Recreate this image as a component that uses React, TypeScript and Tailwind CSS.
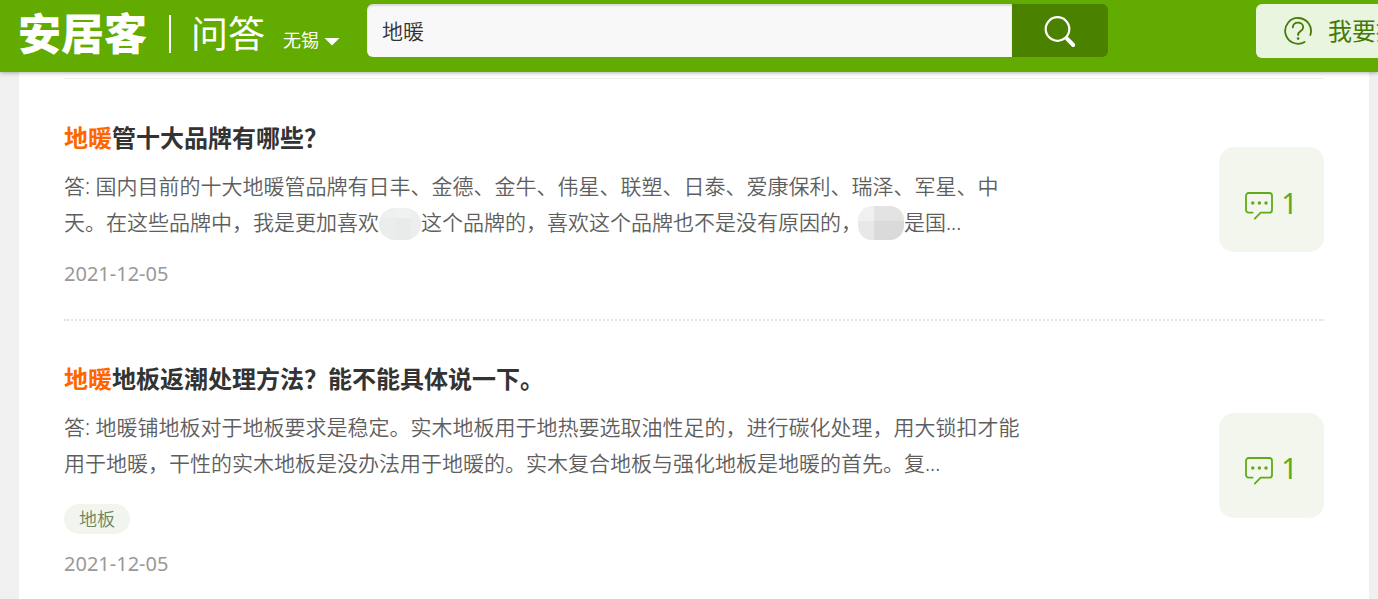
import React from "react";

type Part = string | { mosaic: "light" | "dark" };

interface Question {
  title: string;
  answer: Part[];
  tags: string[];
  date: string;
  replies: number;
}

const KEYWORD = "地暖";

const QUESTIONS: Question[] = [
  {
    title: "管十大品牌有哪些？",
    answer: [
      "国内目前的十大地暖管品牌有日丰、金德、金牛、伟星、联塑、日泰、爱康保利、瑞泽、军星、中天。在这些品牌中，我是更加喜欢",
      { mosaic: "light" },
      "这个品牌的，喜欢这个品牌也不是没有原因的，",
      { mosaic: "dark" },
      "是国...",
    ],
    tags: [],
    date: "2021-12-05",
    replies: 1,
  },
  {
    title: "地板返潮处理方法？能不能具体说一下。",
    answer: [
      "地暖铺地板对于地板要求是稳定。实木地板用于地热要选取油性足的，进行碳化处理，用大锁扣才能用于地暖，干性的实木地板是没办法用于地暖的。实木复合地板与强化地板是地暖的首先。复...",
    ],
    tags: ["地板"],
    date: "2021-12-05",
    replies: 1,
  },
];

function SearchIcon() {
  return (
    <svg width="34" height="34" viewBox="0 0 34 34" fill="none" stroke="#fff" aria-hidden="true">
      <circle cx="14.5" cy="15" r="11.8" strokeWidth="2.2" />
      <path d="M22.5 23 L25 25.5" strokeWidth="2.6" />
      <path d="M24 24.6 L30.2 31" strokeWidth="4" strokeLinecap="round" />
    </svg>
  );
}

function AskIcon() {
  return (
    <svg width="28" height="28" viewBox="0 0 28 28" fill="none" stroke="#447a06" strokeWidth="1.8" strokeLinecap="round" aria-hidden="true">
      <path d="M20.6 25 A12.9 12.9 0 1 1 26.3 18" />
      <path d="M8.8 10.4 C8.8 7.4 11 5.7 14 5.7 C17 5.7 19.2 7.6 19.2 10.2 C19.2 12.2 18 13.2 16.4 14.3 C14.9 15.3 14.1 16.2 14.1 18" />
      <circle cx="14.1" cy="21.6" r="1.3" fill="#447a06" stroke="none" />
    </svg>
  );
}

function CommentIcon() {
  return (
    <svg width="28" height="28" viewBox="0 0 28 28" fill="none" stroke="#62ab17" strokeWidth="1.8" strokeLinecap="round" strokeLinejoin="round" aria-hidden="true">
      <path d="M7.6 20.6 H3.6 A2.6 2.6 0 0 1 1 18 V3.6 A2.6 2.6 0 0 1 3.6 1 H24.4 A2.6 2.6 0 0 1 27 3.6 V18 A2.6 2.6 0 0 1 24.4 20.6 H15.6 L9.8 26.6" />
      <g fill="#62ab17" stroke="none">
        <circle cx="7.8" cy="11" r="1.7" />
        <circle cx="14.4" cy="11" r="1.7" />
        <circle cx="21" cy="11" r="1.7" />
      </g>
    </svg>
  );
}

function Mosaic({ tone }: { tone: "light" | "dark" }) {
  return tone === "light" ? (
    <span className="inline-grid h-8 w-[42px] grid-cols-[16px_16px_1fr] grid-rows-[10px_1fr] overflow-hidden rounded-[16px] bg-[#ebecec] align-bottom">
      <span className="bg-[#eeefef]" />
      <span className="bg-[#f0f1f1]" />
      <span className="bg-[#eeeeee]" />
      <span className="bg-[#ebecec]" />
      <span className="bg-[#e9eaea]" />
      <span className="bg-[#ededed]" />
    </span>
  ) : (
    <span className="-ml-1 inline-grid h-[34px] w-[46px] grid-cols-[16px_1fr] grid-rows-[15px_1fr] overflow-hidden rounded-[14px] align-bottom">
      <span className="bg-[#f0f0f0]" />
      <span className="bg-[#e3e3e4]" />
      <span className="bg-[#e8e8e8]" />
      <span className="bg-[#dadadb]" />
    </span>
  );
}

function Header() {
  return (
    <header className="relative overflow-hidden bg-[#62ab00] text-white shadow-[0_1px_4px_rgba(0,0,0,0.3)]">
      <div className="flex h-[72px] min-w-[1438px] items-start pl-[18px]">
        <div className="flex h-[68px] w-[349px] shrink-0 items-center">
          <a href="#home" className="text-[43px] leading-[44px] font-black">安居客</a>
          <span className="ml-[22px] h-[38px] w-[2px] bg-white" />
          <a href="#ask" className="ml-5 text-[37px] leading-[44px] font-normal">问答</a>
          <button type="button" className="ml-[18px] flex items-center gap-[5px] pt-3 text-[18px] leading-7">
            无锡
            <svg width="16" height="8" viewBox="0 0 16 8" className="mt-1" aria-hidden="true">
              <path d="M0.5 0 H15.5 L8 7.6 Z" fill="#fff" />
            </svg>
          </button>
        </div>
        <form role="search" className="mt-1 mr-[148px] flex h-[53px] min-w-0 flex-1" onSubmit={(e) => e.preventDefault()}>
          <input
            type="text"
            aria-label="搜索问题"
            defaultValue={KEYWORD}
            className="min-w-0 flex-1 rounded-l-[6px] bg-[#f8f8f8] px-[15px] text-[21px] leading-8 font-[350] text-[#333] shadow-[inset_0_2px_2px_rgba(0,0,0,0.12)] outline-none"
          />
          <button type="submit" aria-label="搜索" className="flex w-24 items-center justify-center rounded-r-[6px] bg-[#4a8200]">
            <SearchIcon />
          </button>
        </form>
        <button type="button" className="mt-1 flex h-[54px] w-[182px] shrink-0 items-center gap-4 rounded-[6px] bg-[#e9f5de] pl-7 text-2xl text-[#447a06]">
          <AskIcon />
          我要提问
        </button>
      </div>
    </header>
  );
}

function QuestionItem({ q }: { q: Question }) {
  return (
    <li className="flex items-center justify-between border-b-2 border-dotted border-[#e2e2e2] pt-[31px] pb-[31px]">
      <article className="max-w-[960px] pt-[9px]">
        <h2 className="text-2xl leading-9 font-bold text-[#333]">
          <a href="#question">
            <em className="text-[#ff6600] not-italic">{KEYWORD}</em>
            {q.title}
          </a>
        </h2>
        <p className="mt-3 text-[21px] leading-9 font-[350] text-[#5e5e5e]">
          {"答: "}
          {q.answer.map((part, i) =>
            typeof part === "string" ? <React.Fragment key={i}>{part}</React.Fragment> : <Mosaic key={i} tone={part.mosaic} />
          )}
        </p>
        {q.tags.length > 0 ? (
          <div className="mt-[23px] mb-4 flex">
            {q.tags.map((tag) => (
              <a key={tag} href="#tag" className="rounded-full bg-[#f1f5ee] px-[15px] text-[18px] leading-[30px] font-[350] text-[#6b8560]">
                {tag}
              </a>
            ))}
          </div>
        ) : (
          <div className="h-5" />
        )}
        <time className="block text-[20px] leading-7 text-[#999]">{q.date}</time>
      </article>
      <a href="#replies" className="flex size-[105px] shrink-0 items-center justify-center gap-2 rounded-[15px] bg-[#f2f6ed] text-[#62ab17]">
        <span className="mt-3">
          <CommentIcon />
        </span>
        <span className="mt-1.5 text-[29px] leading-9">{q.replies}</span>
      </a>
    </li>
  );
}

export default function App() {
  return (
    <div lang="zh-CN" className="min-h-screen bg-[#f0f0f0] font-['Noto_Sans','Noto_Sans_CJK_SC',sans-serif]">
      <Header />
      <main className="mr-[9px] ml-[19px] bg-white px-[45px] pt-[6px]">
        <ul className="border-t border-[#eeeeee] pt-px">
          {QUESTIONS.map((q) => (
            <QuestionItem key={q.title} q={q} />
          ))}
        </ul>
      </main>
    </div>
  );
}
